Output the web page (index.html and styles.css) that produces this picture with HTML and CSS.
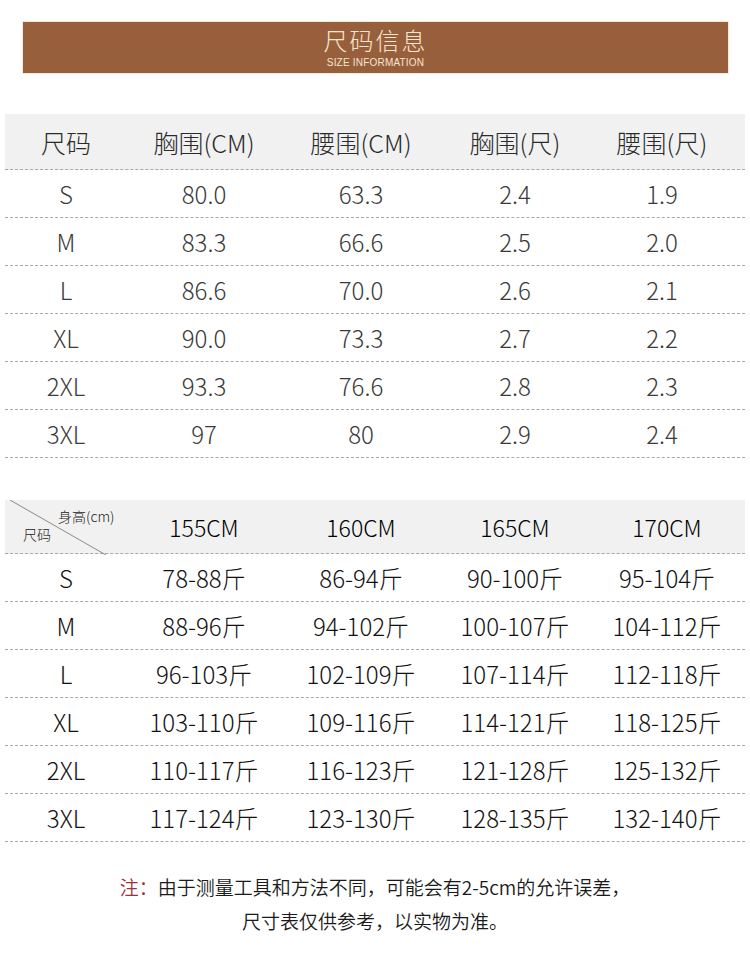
FILE: index.html
```html
<!DOCTYPE html>
<html lang="zh-CN">
<head>
<meta charset="utf-8">
<title>尺码信息</title>
<link rel="stylesheet" href="styles.css">
</head>
<body>
<div class="page">
  <div class="banner">
    <div class="banner-title">尺码信息</div>
    <div class="banner-sub">SIZE INFORMATION</div>
  </div>

  <div class="table t1">
    <div class="row head">
      <div>尺码</div><div>胸围(CM)</div><div>腰围(CM)</div><div>胸围(尺)</div><div>腰围(尺)</div>
    </div>
    <div class="row"><div>S</div><div>80.0</div><div>63.3</div><div>2.4</div><div>1.9</div></div>
    <div class="row"><div>M</div><div>83.3</div><div>66.6</div><div>2.5</div><div>2.0</div></div>
    <div class="row"><div>L</div><div>86.6</div><div>70.0</div><div>2.6</div><div>2.1</div></div>
    <div class="row"><div>XL</div><div>90.0</div><div>73.3</div><div>2.7</div><div>2.2</div></div>
    <div class="row"><div>2XL</div><div>93.3</div><div>76.6</div><div>2.8</div><div>2.3</div></div>
    <div class="row"><div>3XL</div><div>97</div><div>80</div><div>2.9</div><div>2.4</div></div>
  </div>

  <div class="table t2">
    <div class="row head">
      <div class="corner">
        <svg class="diag" width="96" height="55" viewBox="0 0 96 55"><line x1="0" y1="0" x2="96" y2="55" stroke="#8a8a8a" stroke-width="1"/></svg>
        <span class="corner-top">身高(cm)</span>
        <span class="corner-bottom">尺码</span>
      </div>
      <div>155CM</div><div>160CM</div><div>165CM</div><div>170CM</div>
    </div>
    <div class="row"><div>S</div><div>78-88斤</div><div>86-94斤</div><div>90-100斤</div><div>95-104斤</div></div>
    <div class="row"><div>M</div><div>88-96斤</div><div>94-102斤</div><div>100-107斤</div><div>104-112斤</div></div>
    <div class="row"><div>L</div><div>96-103斤</div><div>102-109斤</div><div>107-114斤</div><div>112-118斤</div></div>
    <div class="row"><div>XL</div><div>103-110斤</div><div>109-116斤</div><div>114-121斤</div><div>118-125斤</div></div>
    <div class="row"><div>2XL</div><div>110-117斤</div><div>116-123斤</div><div>121-128斤</div><div>125-132斤</div></div>
    <div class="row"><div>3XL</div><div>117-124斤</div><div>123-130斤</div><div>128-135斤</div><div>132-140斤</div></div>
  </div>

  <div class="note">
    <p><span class="note-label">注：</span>由于测量工具和方法不同，可能会有2-5cm的允许误差，</p>
    <p>尺寸表仅供参考，以实物为准。</p>
  </div>
</div>
</body>
</html>
```

FILE: styles.css
```css
html, body {
  margin: 0;
  padding: 0;
  background: #ffffff;
}
.page {
  width: 750px;
  font-family: "Noto Sans CJK SC", "Noto Sans", sans-serif;
  padding-top: 22px;
}
.banner {
  margin: 0 22px 0 23px;
  height: 51px;
  background: #985f3c;
  box-shadow: 0 0 0 1px #f6e9d8;
  display: flex;
  flex-direction: column;
  align-items: center;
  justify-content: center;
  color: #f7e6cf;
}
.banner-title {
  font-size: 24px;
  line-height: 26px;
  letter-spacing: 2px;
  font-weight: 300;
}
.banner-sub {
  font-family: "Liberation Sans Narrow", "Liberation Sans", sans-serif;
  font-size: 10px;
  line-height: 12px;
  letter-spacing: 0.2px;
  margin-top: 4px;
}
.table {
  margin: 41px 5px 0 5px;
}
.row {
  display: grid;
  grid-template-columns: 122px 154px 160px 148px 156px;
  height: 48px;
  align-items: center;
  text-align: center;
  border-bottom: 1px dashed #a8a8a8;
  box-sizing: border-box;
}
.t1 .row {
  grid-template-columns: 122px 154px 160px 148px 146px;
  color: #3a3a3a;
  font-size: 24px;
  font-weight: 300;
}
.t1 .row.head {
  height: 56px;
  background: #f1f1f1;
  color: #2a2a2a;
  font-size: 25px;
}
.t2 {
  margin-top: 42px;
}
.t2 .row {
  color: #111111;
  font-size: 24px;
  font-weight: 300;
}
.t2 .row.head {
  height: 54px;
  background: #f1f1f1;
  color: #000000;
  font-size: 23px;
  font-weight: 300;
}
.corner {
  position: relative;
  height: 100%;
  align-self: stretch;
}
.diag {
  position: absolute;
  left: 5px;
  top: 0;
}
.corner-top {
  position: absolute;
  left: 53px;
  top: 8px;
  font-size: 14px;
  line-height: 17px;
  color: #222;
}
.corner-bottom {
  position: absolute;
  left: 18px;
  top: 26px;
  font-size: 14px;
  line-height: 17px;
  color: #222;
}
.note {
  margin-top: 28px;
  text-align: center;
  font-size: 19px;
  font-weight: 350;
  color: #1a1a1a;
}
.note p {
  margin: 0;
  line-height: 34px;
}
.note-label {
  color: #a0303c;
}
```
